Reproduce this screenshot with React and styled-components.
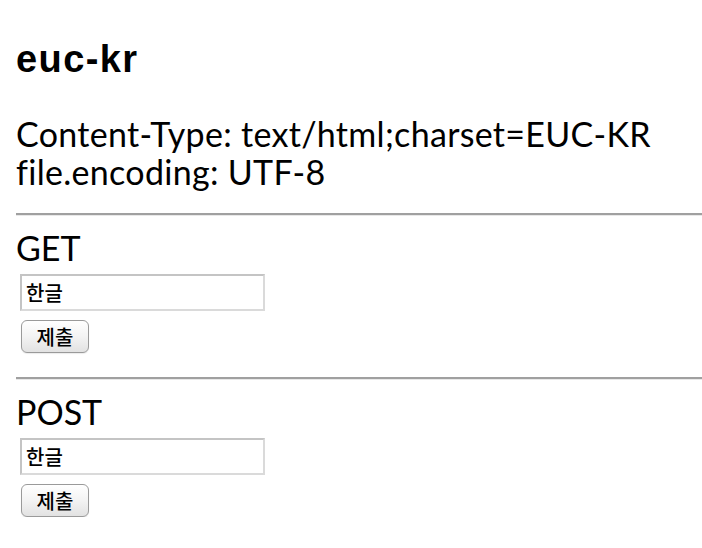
import React from "react";
import styled, { createGlobalStyle } from "styled-components";

const GlobalStyle = createGlobalStyle`
  html, body {
    margin: 0;
    padding: 0;
    background: #ffffff;
    overflow: hidden;
  }
  body {
    font-family: Lato, "Noto Sans CJK KR", sans-serif;
    color: #000;
  }
`;

const Page = styled.div`
  display: flex;
  flex-direction: column;
  padding: 39px 0 0 16px;
`;

const Title = styled.h1`
  margin: 0;
  font-family: "Liberation Sans", Arial, sans-serif;
  font-weight: 700;
  font-size: 38px;
  line-height: 40px;
  letter-spacing: 1.4px;
`;

const Info = styled.div`
  margin-top: 36px;
  font-family: Lato, "Noto Sans CJK KR", sans-serif;
  font-size: 34px;
  line-height: 38px;
  letter-spacing: 0.3px;
`;

const Rule = styled.hr`
  margin: 0;
  height: 0;
  border: none;
  border-top: 2px solid #a0a0a0;
  border-bottom: 1px solid #e8e8e8;
`;

const Section = styled.section`
  display: flex;
  flex-direction: column;
  margin-top: ${(p) => p.$gap}px;
`;

const SectionTitle = styled.h2`
  margin: 13px 0 0;
  font-family: Lato, sans-serif;
  font-weight: 400;
  font-size: 34px;
  line-height: 38px;
`;

const Form = styled.form`
  display: flex;
  flex-direction: column;
  align-items: flex-start;
  gap: 9px;
  margin-top: 7px;
`;

const TextInput = styled.input`
  box-sizing: border-box;
  width: 245px;
  height: 37px;
  margin-left: 4px;
  padding: 0 4px;
  border: 2px solid;
  border-color: #c4c4c4 #dadada #dadada #c4c4c4;
  background: #fff;
  font-family: "Noto Sans CJK KR", sans-serif;
  font-weight: 500;
  font-size: 20px;
  color: #000;
  outline: none;
`;

const Submit = styled.button`
  box-sizing: border-box;
  width: 68px;
  height: 33px;
  margin-left: 5px;
  padding: 0;
  border: 1px solid #9a9a9a;
  border-radius: 6px;
  background: linear-gradient(#ffffff, #f3f3f3 50%, #e2e2e2);
  box-shadow: 0 1px 1px rgba(0, 0, 0, 0.08);
  font-family: "Noto Sans CJK KR", sans-serif;
  font-weight: 500;
  font-size: 20px;
  line-height: 1;
  color: #000;
`;

function FormSection({ method, gap }) {
  return (
    <Section $gap={gap}>
      <Rule />
      <SectionTitle>{method}</SectionTitle>
      <Form method={method.toLowerCase()} onSubmit={(e) => e.preventDefault()}>
        <TextInput type="text" defaultValue="한글" />
        <Submit type="submit">제출</Submit>
      </Form>
    </Section>
  );
}

export default function App() {
  return (
    <>
      <GlobalStyle />
      <Page>
        <Title>euc-kr</Title>
        <Info>
          Content-Type: text/html;charset=EUC-KR
          <br />
          file.encoding: UTF-8
        </Info>
        <FormSection method="GET" gap={22} />
        <FormSection method="POST" gap={24} />
      </Page>
    </>
  );
}
